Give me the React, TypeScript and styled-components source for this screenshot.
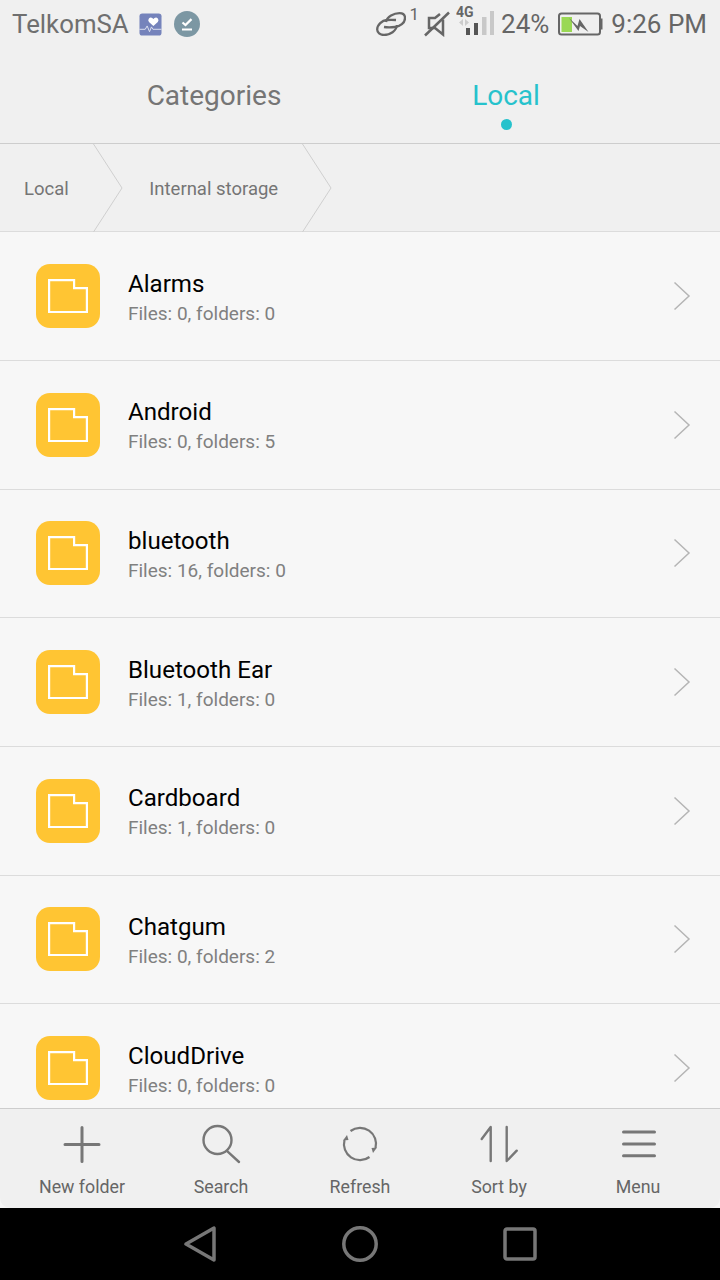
import React from 'react';
import styled, { createGlobalStyle } from 'styled-components';

const GlobalStyle = createGlobalStyle`
  html, body {
    margin: 0;
    padding: 0;
    background: #000;
  }
  body {
    font-family: Roboto, "Liberation Sans", sans-serif;
  }
`;

const folders = [
  { name: 'Alarms', meta: 'Files: 0, folders: 0' },
  { name: 'Android', meta: 'Files: 0, folders: 5' },
  { name: 'bluetooth', meta: 'Files: 16, folders: 0' },
  { name: 'Bluetooth Ear', meta: 'Files: 1, folders: 0' },
  { name: 'Cardboard', meta: 'Files: 1, folders: 0' },
  { name: 'Chatgum', meta: 'Files: 0, folders: 2' },
  { name: 'CloudDrive', meta: 'Files: 0, folders: 0' },
];

function NewFolderIcon() {
  return (
    <svg width="44" height="44" viewBox="0 0 44 44" fill="none" stroke="#777" strokeWidth="3" strokeLinecap="round">
      <path d="M22 4.500v34M5 21.600h34" />
    </svg>
  );
}

function SearchIcon() {
  return (
    <svg width="44" height="44" viewBox="0 0 44 44" fill="none" stroke="#777" strokeWidth="2.400" strokeLinecap="round">
      <circle cx="18.500" cy="17" r="14" />
      <path d="M28.700 28.700L40 39" />
    </svg>
  );
}

function RefreshIcon() {
  return (
    <svg width="44" height="44" viewBox="0 0 44 44" fill="none" stroke="#777" strokeWidth="2.200">
      <path d="M12.500 8A16 16 0 0 1 37.500 25" />
      <path d="M31.500 34A16 16 0 0 1 6.500 17" />
      <path d="M33.500 25l5.500-.500-4 5.500z" fill="#777" stroke="none" />
      <path d="M10.500 17l-5.500.500 4-5.500z" fill="#777" stroke="none" />
    </svg>
  );
}

function SortIcon() {
  return (
    <svg width="44" height="44" viewBox="0 0 44 44" fill="none" stroke="#777" strokeWidth="2.400" strokeLinecap="round" strokeLinejoin="round">
      <path d="M4.700 16L13.700 4v34" />
      <path d="M29.700 4v34l10-10.300" />
    </svg>
  );
}

function MenuIcon() {
  return (
    <svg width="44" height="44" viewBox="0 0 44 44" fill="none" stroke="#777" strokeWidth="3" strokeLinecap="round">
      <path d="M7.500 9h31M7.500 21h31M7.500 32.700h31" />
    </svg>
  );
}

const tools = [
  { label: 'New folder', Icon: NewFolderIcon },
  { label: 'Search', Icon: SearchIcon },
  { label: 'Refresh', Icon: RefreshIcon },
  { label: 'Sort by', Icon: SortIcon },
  { label: 'Menu', Icon: MenuIcon },
];

function CrumbArrow() {
  return (
    <ArrowSvg width="30" height="88" viewBox="0 0 30 88" fill="none" stroke="#cfcfcf" strokeWidth="1">
      <path d="M0.500 0L29 44 0.500 88" />
    </ArrowSvg>
  );
}

export default function App() {
  return (
    <Screen>
      <GlobalStyle />
      <Header>
        <StatusBar>
          <Carrier>TelkomSA</Carrier>
          <svg width="23" height="23" viewBox="0 0 24 24">
            <rect width="23" height="23" x="0.500" y="0.500" rx="3" fill="#7583bb" />
            <path d="M15 13.500l-4.600-4.200a2.700 2.700 0 0 1 3.400-4.100l1.200 1 1.200-1a2.700 2.700 0 0 1 3.400 4.100z" fill="#fff" />
            <path d="M0.500 17h6l2-3.500 2.500 6 2-5 1.500 2.500h9" fill="none" stroke="#dfe3f1" strokeWidth="1" />
          </svg>
          <CheckBadge viewBox="0 0 26 26" width="26" height="26">
            <circle cx="13" cy="13" r="13" fill="#7c97a3" />
            <path d="M8.500 11.500l3 2.600 6-6" fill="none" stroke="#fff" strokeWidth="2.200" />
            <path d="M8 18.500h10" stroke="#fff" strokeWidth="2" />
          </CheckBadge>
          <Spacer />
          <svg width="30" height="24" viewBox="0 0 30 24" fill="none" stroke="#666" strokeWidth="2.300">
            <path d="M10 10C11 4.500 18 1.200 23.500 1.200 27.500 1.200 29 3.500 29 6 29 11 24 14.500 19 15 15 15.500 11 15.500 8 15" />
            <path d="M21 13C20.500 19 14 23 8 23 4 23 1.200 20.500 1.200 17.500 1.200 12.500 6 8.500 11 8 14 7.700 17 7.800 20 8" />
          </svg>
          <Superscript>1</Superscript>
          <svg width="26" height="26" viewBox="0 0 26 26" fill="none" stroke="#666" strokeWidth="2.500">
            <path d="M19 8.500V23.500l-8-6.500H5V7H11l5-4" />
            <path d="M1 24.500L25 1.500" />
          </svg>
          <NetworkIcon viewBox="0 -2 40 40" width="40" height="40">
            <text x="0" y="11" fontFamily="Roboto, sans-serif" fontWeight="700" fontSize="14" fill="#666">4G</text>
            <path d="M7 13v7l-4-3.500zM9 13v7l4-3.500z" fill="#ccc" />
            <rect x="10" y="22" width="4" height="7" fill="#555" />
            <rect x="18" y="17" width="4" height="12" fill="#555" />
            <rect x="26" y="11" width="4.500" height="18" fill="#c8c8c8" />
            <rect x="34" y="5" width="4" height="24" fill="#c8c8c8" />
          </NetworkIcon>
          <Battery>24%</Battery>
          <BatteryIcon viewBox="0 0 46 24" width="46" height="24">
            <rect x="2" y="1.500" width="41" height="21" rx="2.500" fill="none" stroke="#666" strokeWidth="2" />
            <rect x="43.500" y="6.500" width="2" height="11" fill="#666" />
            <rect x="4.500" y="5" width="10.500" height="15" fill="#9ad854" />
            <path d="M12 6l8.500 8 2-7 9 13-8.500-6-1.500 5z" fill="#666" />
          </BatteryIcon>
          <Clock>9:26 PM</Clock>
        </StatusBar>
        <Tabs>
          <Tab>Categories</Tab>
          <Tab $active>Local</Tab>
        </Tabs>
      </Header>
      <Breadcrumbs>
        <Crumb $first>Local</Crumb>
        <CrumbArrow />
        <Crumb>Internal storage</Crumb>
        <CrumbArrow />
      </Breadcrumbs>
      <FolderList>
        {folders.map((folder) => (
          <FolderRow key={folder.name}>
            <FolderBadge>
              <svg width="40" height="34" viewBox="0 0 40 34" fill="none" stroke="#fff" strokeWidth="2.200">
                <path d="M1.100 1.100h25v8h12.800v24H1.100z" />
              </svg>
            </FolderBadge>
            <FolderText>
              <FolderName>{folder.name}</FolderName>
              <FolderMeta>{folder.meta}</FolderMeta>
            </FolderText>
            <svg width="18" height="30" viewBox="0 0 18 30" fill="none" stroke="#b5b5b5" strokeWidth="1.500">
              <path d="M1.500 1.500L16 15 1.500 28.500" />
            </svg>
          </FolderRow>
        ))}
      </FolderList>
      <Toolbar>
        {tools.map(({ label, Icon }) => (
          <ToolButton key={label}>
            <Icon />
            <ToolLabel>{label}</ToolLabel>
          </ToolButton>
        ))}
      </Toolbar>
      <NavBar>
        <svg width="32" height="36" viewBox="0 0 32 36" fill="none" stroke="#777" strokeWidth="3.500" strokeLinejoin="round">
          <path d="M30 2v32L2 18z" />
        </svg>
        <svg width="36" height="36" viewBox="0 0 36 36" fill="none" stroke="#777" strokeWidth="3.500">
          <circle cx="18" cy="18" r="16.200" />
        </svg>
        <svg width="34" height="34" viewBox="0 0 34 34" fill="none" stroke="#777" strokeWidth="3.500" strokeLinejoin="round">
          <rect x="2" y="2" width="30" height="30" rx="2" />
        </svg>
      </NavBar>
    </Screen>
  );
}

const Screen = styled.div`
  width: 720px;
  height: 1280px;
  display: flex;
  flex-direction: column;
  overflow: hidden;
  background: #f7f7f7;
`;

const Header = styled.header`
  box-sizing: border-box;
  background: #f0f0f0;
  border-bottom: 1px solid #cdcdcd;
  height: 144px;
  flex: none;
`;

const StatusBar = styled.div`
  height: 48px;
  display: flex;
  align-items: center;
  padding: 0 13px 0 12px;
  color: #666;
`;

const Carrier = styled.span`
  font-size: 25.800px;
  color: #6f6f6f;
  margin-right: 10px;
`;

const CheckBadge = styled.svg`
  margin-left: 12px;
`;

const Spacer = styled.div`
  flex: 1;
`;

const Superscript = styled.span`
  font-size: 17px;
  align-self: flex-start;
  margin: 4px 5px 0 3px;
`;

const NetworkIcon = styled.svg`
  margin: 0 5px 0 6px;
`;

const Battery = styled.span`
  font-size: 26px;
`;

const BatteryIcon = styled.svg`
  margin: 0 8px 0 8px;
`;

const Clock = styled.span`
  font-size: 26px;
`;

const Tabs = styled.nav`
  display: grid;
  grid-template-columns: 428px 156px;
  height: 95px;
`;

const Tab = styled.div<{ $active?: boolean }>`
  position: relative;
  text-align: center;
  font-size: 28px;
  line-height: 33px;
  padding-top: 31px;
  color: ${(p) => (p.$active ? '#26c2cc' : '#757575')};

  &::after {
    content: '';
    display: ${(p) => (p.$active ? 'block' : 'none')};
    width: 11px;
    height: 11px;
    border-radius: 50%;
    background: #26c2cc;
    position: absolute;
    left: 73px;
    top: 71px;
  }
`;

const Breadcrumbs = styled.div`
  box-sizing: border-box;
  height: 88px;
  flex: none;
  display: flex;
  align-items: center;
  background: #f0f0f0;
  border-bottom: 1px solid #dcdcdc;
`;

const Crumb = styled.span<{ $first?: boolean }>`
  font-size: 18.500px;
  line-height: 22px;
  color: #757575;
  padding: 2px 24px 0 ${(p) => (p.$first ? '24px' : '26.500px')};
`;

const ArrowSvg = styled.svg`
  flex: none;
`;

const FolderList = styled.ul`
  list-style: none;
  margin: 0;
  padding: 0.330px 0 0;
  flex: 1;
  min-height: 0;
  overflow: hidden;
`;

const FolderRow = styled.li`
  box-sizing: border-box;
  height: 128.670px;
  display: flex;
  align-items: center;
  padding: 0 29px 0 36px;
  border-bottom: 1px solid #dcdcdc;
`;

const FolderBadge = styled.div`
  width: 64px;
  height: 64px;
  flex: none;
  border-radius: 14px;
  background: #ffc533;
  display: flex;
  align-items: center;
  justify-content: center;
`;

const FolderText = styled.div`
  flex: 1;
  margin-left: 28px;
  padding-top: 2px;
`;

const FolderName = styled.div`
  font-size: 24.100px;
  line-height: 28px;
  color: #000;
`;

const FolderMeta = styled.div`
  font-size: 19px;
  line-height: 22px;
  margin-top: 5px;
  color: #808080;
`;

const Toolbar = styled.footer`
  height: 100px;
  flex: none;
  box-sizing: border-box;
  display: grid;
  grid-template-columns: repeat(5, 1fr);
  padding: 0 12.500px;
  background: #f0f0f0;
  border-top: 1px solid #cdcdcd;
  border-radius: 0 0 10px 10px;
`;

const ToolButton = styled.div`
  display: flex;
  flex-direction: column;
  align-items: center;
  padding-top: 14px;
`;

const ToolLabel = styled.span`
  font-size: 17.800px;
  line-height: 22px;
  margin-top: 9px;
  color: #666;
`;

const NavBar = styled.div`
  height: 72px;
  flex: none;
  box-sizing: border-box;
  padding-left: 1px;
  background: #000;
  display: flex;
  align-items: center;
  justify-content: center;
  gap: 125.500px;
`;
